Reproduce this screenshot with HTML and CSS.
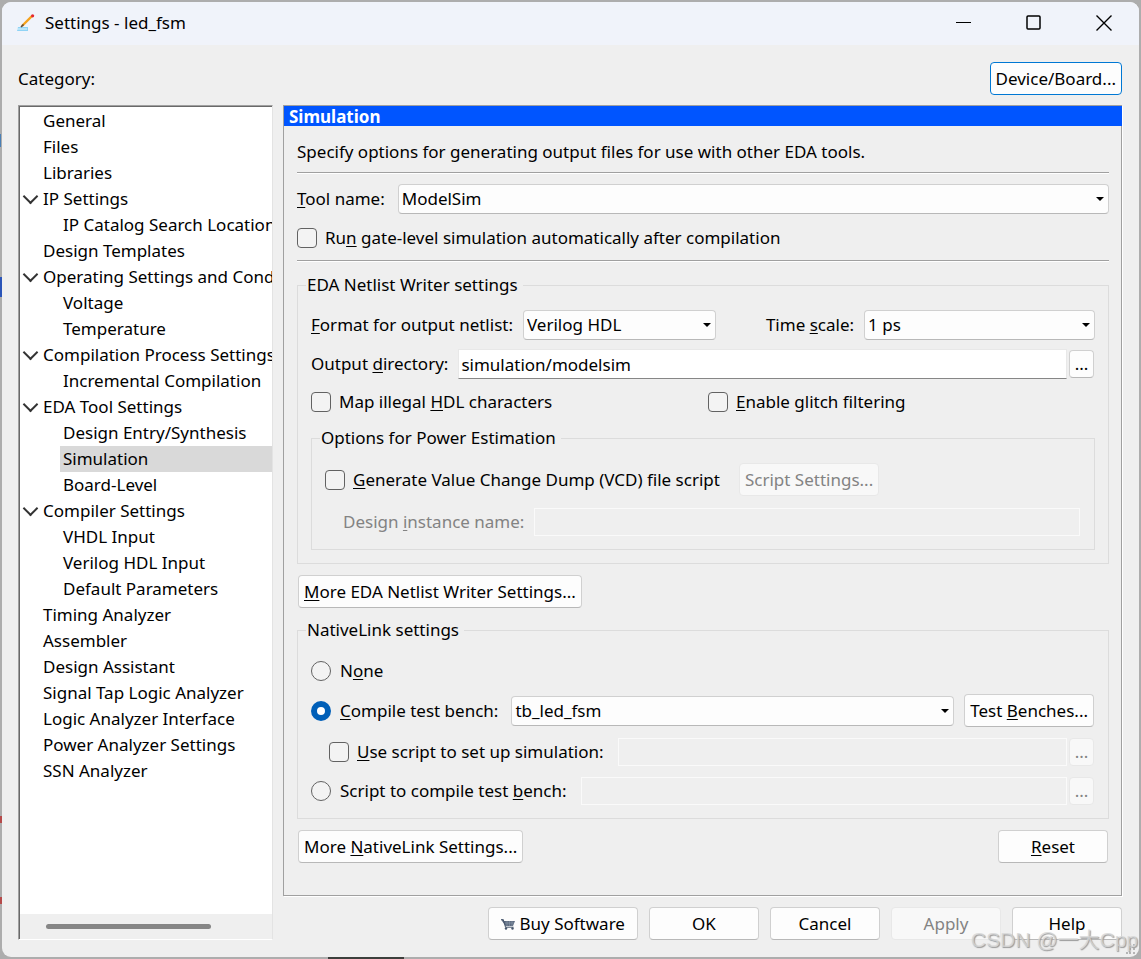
FILE: index.html
```html
<!DOCTYPE html>
<html lang="en">

<head>
    <meta charset="UTF-8">
    <title>Settings - led_fsm</title>
    <link rel="stylesheet" href="styles.css">
</head>

<body>
    <main class="window">
        <header class="titlebar">
            <svg class="app-icon" width="18" height="18" viewBox="0 0 18 18">
                <path d="M1 13h10v4H0z" fill="#8fd3f5" />
                <path d="M0 15h10" stroke="#e2f5fd" />
                <path d="M5 12 15 2" stroke="#f5a11c" stroke-width="2.4" />
                <path d="M4 13l2.5-2.5" stroke="#5b4a3c" stroke-width="1.6" />
                <circle cx="15.6" cy="1.8" r="1.6" fill="#e5262f" />
            </svg>
            <h1>Settings - led_fsm</h1>
            <div class="controls">
                <button aria-label="Minimize"><svg width="16" height="16"><path d="M0 7.5h15" /></svg></button>
                <button aria-label="Maximize"><svg width="16" height="16"><rect x="1" y="1" width="13" height="13" rx="1" stroke-width="1.5" /></svg></button>
                <button aria-label="Close"><svg width="16" height="16"><path d="M.5.5l15 15M15.500.5l-15 15" stroke-width="1.4" /></svg></button>
            </div>
        </header>

        <div class="content">
            <div class="top">
                <span>Category:</span>
                <button class="btn focus">Device/Board...</button>
            </div>

            <div class="columns">
                <nav class="tree">
                    <ul role="tree">
                        <li role="treeitem">General</li>
                        <li role="treeitem">Files</li>
                        <li role="treeitem">Libraries</li>
                        <li role="treeitem" class="open">IP Settings</li>
                        <li role="treeitem" class="child">IP Catalog Search Locations</li>
                        <li role="treeitem">Design Templates</li>
                        <li role="treeitem" class="open">Operating Settings and Conditions</li>
                        <li role="treeitem" class="child">Voltage</li>
                        <li role="treeitem" class="child">Temperature</li>
                        <li role="treeitem" class="open">Compilation Process Settings</li>
                        <li role="treeitem" class="child">Incremental Compilation</li>
                        <li role="treeitem" class="open">EDA Tool Settings</li>
                        <li role="treeitem" class="child">Design Entry/Synthesis</li>
                        <li role="treeitem" class="child selected" aria-selected="true">Simulation</li>
                        <li role="treeitem" class="child">Board-Level</li>
                        <li role="treeitem" class="open">Compiler Settings</li>
                        <li role="treeitem" class="child">VHDL Input</li>
                        <li role="treeitem" class="child">Verilog HDL Input</li>
                        <li role="treeitem" class="child">Default Parameters</li>
                        <li role="treeitem">Timing Analyzer</li>
                        <li role="treeitem">Assembler</li>
                        <li role="treeitem">Design Assistant</li>
                        <li role="treeitem">Signal Tap Logic Analyzer</li>
                        <li role="treeitem">Logic Analyzer Interface</li>
                        <li role="treeitem">Power Analyzer Settings</li>
                        <li role="treeitem">SSN Analyzer</li>
                    </ul>
                    <div class="scrollbar"><div class="thumb"></div></div>
                </nav>

                <div class="right">
                    <section class="panel">
                        <h2>Simulation</h2>
                        <div class="panel-body">
                            <p>Specify options for generating output files for use with other EDA tools.</p>
                            <hr>
                            <div class="row tool">
                                <label for="tool"><u>T</u>ool name:</label>
                                <div class="select">
                                    <select id="tool"><option>ModelSim</option></select>
                                </div>
                            </div>
                            <div class="row gate">
                                <input type="checkbox" id="gate">
                                <label for="gate">Ru<u>n</u> gate-level simulation automatically after compilation</label>
                            </div>
                            <hr>

                            <fieldset class="netlist">
                                <legend>EDA Netlist Writer settings</legend>
                                <div class="row">
                                    <label for="format"><u>F</u>ormat for output netlist:</label>
                                    <div class="select format">
                                        <select id="format"><option>Verilog HDL</option></select>
                                    </div>
                                    <label for="scale">Time <u>s</u>cale:</label>
                                    <div class="select scale">
                                        <select id="scale"><option>1 ps</option></select>
                                    </div>
                                </div>
                                <div class="row directory">
                                    <label for="dir">Output <u>d</u>irectory:</label>
                                    <input type="text" id="dir" value="simulation/modelsim">
                                    <button class="btn browse">...</button>
                                </div>
                                <div class="checks">
                                    <div class="row">
                                        <input type="checkbox" id="map">
                                        <label for="map">Map illegal <u>H</u>DL characters</label>
                                    </div>
                                    <div class="row">
                                        <input type="checkbox" id="glitch">
                                        <label for="glitch"><u>E</u>nable glitch filtering</label>
                                    </div>
                                </div>
                                <fieldset class="power">
                                    <legend>Options for Power Estimation</legend>
                                    <div class="row">
                                        <input type="checkbox" id="vcd">
                                        <label for="vcd"><u>G</u>enerate Value Change Dump (VCD) file script</label>
                                        <button class="btn script" disabled>Script Settings...</button>
                                    </div>
                                    <div class="row instance">
                                        <label for="instance" class="off">Design <u>i</u>nstance name:</label>
                                        <input type="text" id="instance" disabled>
                                    </div>
                                </fieldset>
                            </fieldset>

                            <div class="between">
                                <button class="btn"><u>M</u>ore EDA Netlist Writer Settings...</button>
                            </div>

                            <fieldset class="native">
                                <legend>NativeLink settings</legend>
                                <div class="row">
                                    <input type="radio" name="native" id="none">
                                    <label for="none">N<u>o</u>ne</label>
                                </div>
                                <div class="row bench">
                                    <input type="radio" name="native" id="compile" checked>
                                    <label for="compile"><u>C</u>ompile test bench:</label>
                                    <div class="select">
                                        <select id="bench" aria-label="Test bench"><option>tb_led_fsm</option></select>
                                    </div>
                                    <button class="btn">Test <u>B</u>enches...</button>
                                </div>
                                <div class="row setup">
                                    <input type="checkbox" id="setup">
                                    <label for="setup"><u>U</u>se script to set up simulation:</label>
                                    <input type="text" aria-label="Setup script" disabled>
                                    <button class="btn browse" disabled>...</button>
                                </div>
                                <div class="row">
                                    <input type="radio" name="native" id="script">
                                    <label for="script">Script to compile test <u>b</u>ench:</label>
                                    <input type="text" aria-label="Compile script" disabled>
                                    <button class="btn browse" disabled>...</button>
                                </div>
                            </fieldset>

                            <div class="between">
                                <button class="btn">More <u>N</u>ativeLink Settings...</button>
                                <button class="btn wide"><u>R</u>eset</button>
                            </div>
                        </div>
                    </section>

                    <footer>
                        <button class="btn buy">
                            <svg width="14" height="11" viewBox="0 0 14 11">
                                <path d="M0 .5h2.500L3 2h11l-2 5H4.500z" fill="#5d6b80" />
                                <path d="M0 .7h2.300l2.200 7.500h8" fill="none" stroke="#45556b" />
                                <path d="M4 4h9M6 2v5M8.500 2v5M11 2v5" stroke="#93a0b1" stroke-width=".5" />
                                <circle cx="5" cy="9.500" r="1.200" fill="#45556b" />
                                <circle cx="11.500" cy="9.500" r="1.200" fill="#45556b" />
                            </svg>
                            Buy Software
                        </button>
                        <button class="btn wide">OK</button>
                        <button class="btn wide">Cancel</button>
                        <button class="btn wide" disabled>Apply</button>
                        <button class="btn wide">Help</button>
                    </footer>
                </div>
            </div>
        </div>
        <svg class="grip" width="10" height="10" fill="#b5b5b5">
            <path d="M7 0h2v2H7zM3 4h2v2H3zM7 4h2v2H7zM0 8h2v2H0zM3 8h2v2H3zM7 8h2v2H7z" />
        </svg>
    </main>
    <div class="watermark">CSDN @一大Cpp</div>
</body>

</html>
```
FILE: styles.css
```css
* {
    box-sizing: border-box;
}

body {
    margin: 0;
    min-height: 100vh;
    padding: 2px;
    display: flex;
    background:
        linear-gradient(#4a7fb5, #4a7fb5) 0 134px / 1px 13px no-repeat,
        linear-gradient(#2b55b8, #2b55b8) 0 277px / 2px 20px no-repeat,
        linear-gradient(#b54a4a, #b54a4a) 0 816px / 2px 7px no-repeat,
        linear-gradient(#b54a4a, #b54a4a) 0 897px / 2px 7px no-repeat,
        linear-gradient(#3c3f3c, #3c3f3c) 328px 100% / 76px 2px no-repeat,
        #adadad;
    font-family: "Noto Sans", sans-serif;
    font-size: 17px;
    line-height: 24px;
    color: #000;
}

.window {
    position: relative;
    flex: 1;
    display: flex;
    flex-direction: column;
    background: #efefef;
    border-radius: 9px;
    overflow: hidden;
}

/* title bar */
.titlebar {
    display: flex;
    align-items: center;
    height: 43px;
    padding: 0 0 2px 15px;
    background: #f0f3fa;
}

h1 {
    flex: 1;
    margin: 0 0 0 10px;
    font-size: 17px;
    font-weight: normal;
}

.controls {
    display: flex;
}

.controls button {
    width: 70px;
    height: 40px;
    padding: 0;
    border: none;
    background: none;
}

.controls svg {
    display: block;
    margin: auto;
    fill: none;
    stroke: #000;
}

.content {
    flex: 1;
    display: flex;
    flex-direction: column;
    padding: 17px 17px 17px 16px;
}

.top,
.between {
    display: flex;
    align-items: center;
    justify-content: space-between;
}

.columns {
    flex: 1;
    display: flex;
    gap: 10px;
    margin-top: 10px;
}

/* category tree */
.tree {
    flex: none;
    display: flex;
    flex-direction: column;
    width: 255px;
    overflow: hidden;
    background: #fff;
    border: 1px solid #fff;
    border-top-color: #a0a0a0;
    border-left-color: #a0a0a0;
    border-right-color: #e3e3e3;
}

.tree ul {
    flex: 1;
    margin: 0;
    padding: 1px 0 0;
    border: solid #696969;
    border-width: 1px 0 0 1px;
    list-style: none;
}

.tree li {
    position: relative;
    margin-left: 20px;
    padding-left: 3px;
    line-height: 26px;
    white-space: nowrap;
}

.tree .child {
    margin-left: 40px;
}

.tree .selected {
    background: #d9d9d9;
}

.tree .open::before {
    content: "";
    position: absolute;
    left: -15px;
    top: 5px;
    width: 9px;
    height: 9px;
    border: solid #333;
    border-width: 0 2px 2px 0;
    transform: rotate(45deg);
}

.scrollbar {
    height: 25px;
    padding: 10px 0 0 26px;
    border-left: 1px solid #696969;
    background: #efefef;
}

.thumb {
    width: 165px;
    height: 5px;
    border-radius: 3px;
    background: #868686;
}

/* settings panel */
.right {
    flex: 1;
    min-width: 0;
    display: flex;
    flex-direction: column;
}

.panel {
    flex: 1;
    border: 1px solid #a0a0a0;
    box-shadow: 1px 1px #fff;
}

h2 {
    height: 20px;
    margin: 0 -1px 0 0;
    padding-left: 5px;
    font-size: 17px;
    line-height: 22px;
    background: #0055ff;
    color: #fff;
}

.panel-body {
    padding: 14px 12px 0 13px;
}

p {
    margin: 0 0 8px;
}

hr {
    height: 2px;
    margin: 0;
    border: none;
    border-top: 1px solid #a0a0a0;
    background: #fff;
}

.row {
    display: flex;
    align-items: center;
    white-space: nowrap;
}

.tool {
    margin-top: 10px;
}

.gate {
    margin: 12px 0 10px;
}

u {
    text-underline-offset: 2px;
    text-decoration-thickness: 1px;
    text-decoration-skip-ink: none;
}

.select {
    position: relative;
    flex: 1;
    margin-left: 13px;
}

.select::after {
    content: "";
    position: absolute;
    right: 5px;
    top: 13px;
    border: 4px solid transparent;
    border-top-color: #000;
    border-bottom: none;
    pointer-events: none;
}

select,
input,
.btn {
    font: inherit;
    color: inherit;
}

select {
    display: block;
    width: 100%;
    height: 30px;
    padding: 0 3px;
    appearance: none;
    border: 1px solid #d0d0d0;
    border-bottom-color: #b8b8b8;
    border-radius: 4px;
    background: #fdfdfd;
}

.btn {
    height: 33px;
    padding: 0 5px;
    border: 1px solid #d0d0d0;
    border-bottom-color: #b8b8b8;
    border-radius: 4px;
    background: #fdfdfd;
    white-space: nowrap;
}

.btn:disabled {
    border-color: #e8e8e8;
    background: #f8f8f8;
    color: #838383;
}

.btn.focus {
    border-color: #0078d4;
}

.wide {
    width: 110px;
}

.browse {
    width: 25px;
    height: 28px;
    margin: 0 1px 0 2px;
    padding: 0;
}

input {
    margin: 0;
}

input[type="text"] {
    flex: 1;
    min-width: 0;
    height: 30px;
    margin-left: 10px;
    padding: 0 2px;
    border: 1px solid #e8e8e8;
    border-bottom-color: #868686;
    background: #fff;
}

input[type="text"]:disabled {
    height: 28px;
    border-color: #fafafa;
    background: #efefef;
}

input[type="checkbox"],
input[type="radio"] {
    appearance: none;
    flex: none;
    width: 20px;
    height: 20px;
    margin-right: 8px;
    border: 1px solid #626262;
    border-radius: 4px;
    background: #f3f3f3;
}

input[type="radio"] {
    margin-right: 9px;
    border-radius: 50%;
}

input[type="radio"]:checked {
    border: 6px solid #005fb8;
    background: #fff;
}

.off {
    color: #838383;
}

/* group boxes */
fieldset {
    min-width: 0;
    margin: 0;
    padding: 13px;
    border: 1px solid #dcdcdc;
}

legend {
    margin-left: -5px;
    padding: 0 5px 0 1px;
}

.netlist {
    margin: 11px 0;
}

.format {
    flex: 193;
    margin-left: 10px;
    margin-right: 50px;
}

.scale {
    flex: 231;
    margin-left: 10px;
}

.directory {
    margin-top: 9px;
}

.checks {
    display: grid;
    grid-template-columns: 397fr 387fr;
    margin: 11px 0 12px;
}

.script {
    margin-left: 19px;
}

.instance {
    margin: 12px 1px 0 18px;
}

.native {
    margin: 10px 0 11px;
    padding-top: 17px;
}

.native .row + .row {
    margin-top: 11px;
}

.bench .btn {
    margin: 0 1px 0 10px;
}

.native .row + .setup {
    margin-left: 18px;
}

.native input[type="text"] {
    margin-left: 14px;
}

.between {
    margin: 0 1px;
}

footer {
    display: flex;
    justify-content: flex-end;
    gap: 11px;
    margin-top: 11px;
}

.buy {
    width: 150px;
}

.grip {
    position: absolute;
    right: 3px;
    bottom: 3px;
}

.watermark {
    position: absolute;
    right: 3px;
    bottom: 6px;
    font-family: "Liberation Sans", "Noto Sans CJK SC", sans-serif;
    font-size: 21px;
    line-height: 26px;
    color: rgba(215, 215, 215, 0.8);
    text-shadow: 1px 1px 1px #999;
}
```
